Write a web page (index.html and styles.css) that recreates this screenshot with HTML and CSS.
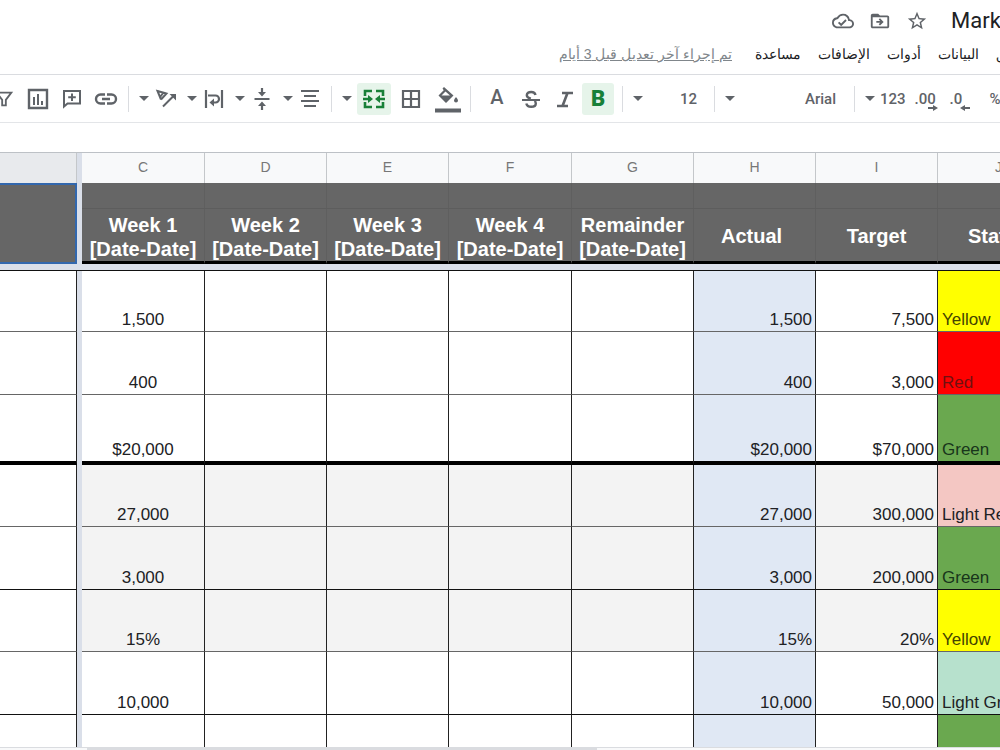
FILE: index.html
```html
<!DOCTYPE html>
<html lang="ar">
<head>
<meta charset="utf-8">
<title>Mark</title>
<link rel="stylesheet" href="styles.css">
</head>
<body>
<header class="top">
  <div class="title-row">
    <button class="plain" aria-label="Saved"><svg class="ic22" viewBox="0 0 24 24"><path fill="currentColor" d="M19.35 10.04A7.49 7.49 0 0 0 12 4C9.11 4 6.6 5.64 5.35 8.04A5.994 5.994 0 0 0 0 14c0 3.31 2.69 6 6 6h13c2.76 0 5-2.24 5-5 0-2.64-2.05-4.78-4.65-4.96zM19 18H6c-2.21 0-4-1.79-4-4 0-2.05 1.53-3.76 3.56-3.97l1.07-.11.5-.95A5.469 5.469 0 0 1 12 6c2.62 0 4.88 1.86 5.39 4.43l.3 1.5 1.53.11A2.98 2.98 0 0 1 22 15c0 1.65-1.35 3-3 3zm-9-3.18-2.09-2.09L6.5 14.14 10 17.6l6-6-1.4-1.4z"/></svg></button>
    <button class="plain" aria-label="Move"><svg class="ic22" viewBox="0 0 24 24"><path fill="currentColor" d="M20 6h-8l-2-2H4c-1.1 0-2 .9-2 2v12c0 1.1.9 2 2 2h16c1.1 0 2-.9 2-2V8c0-1.100-.9-2-2-2zm0 12H4V8h16v10zm-8-1 4-4-4-4-1.400 1.400L12.200 12H8v2h4.200l-1.600 1.600z"/></svg></button>
    <button class="plain" aria-label="Star"><svg class="ic22" viewBox="0 0 24 24"><path fill="currentColor" d="m22 9.240-7.190-.62L12 2 9.190 8.630 2 9.240l5.460 4.730L5.820 21 12 17.270 18.180 21l-1.630-7.030L22 9.240zM12 15.400l-3.760 2.270 1-4.280-3.320-2.880 4.380-.38L12 6.100l1.710 4.040 4.380.38-3.320 2.880 1 4.280L12 15.400z"/></svg></button>
    <h1 class="title">Mark</h1>
  </div>
  <nav class="menu">
    <a class="edited" href="#" dir="rtl">تم إجراء آخر تعديل قبل 3 أيام</a>
    <button class="plain item" dir="rtl">مساعدة</button>
    <button class="plain item" dir="rtl">الإضافات</button>
    <button class="plain item" dir="rtl">أدوات</button>
    <button class="plain item" dir="rtl">البيانات</button>
    <div class="cut"><button class="plain item" dir="rtl">تنسيق</button></div>
  </nav>
</header>

<div class="toolbar" role="toolbar">
  <div class="group">
    <button class="tool filter" aria-label="Filter"><svg class="ic22" viewBox="0 0 24 24"><path fill="none" stroke="currentColor" stroke-width="2" d="M4 5h16l-6 8v6h-4v-6z"/></svg></button>
    <button class="tool" aria-label="Chart"><svg class="ic22" viewBox="0 0 22 22"><path fill="none" stroke="currentColor" stroke-width="2.400" d="M2 2h18v18H2z"/><path stroke="currentColor" stroke-width="2" d="M7 9v8M11 6v11M15 13v4"/></svg></button>
    <button class="tool" aria-label="Comment"><svg class="ic22" viewBox="0 0 22 22"><path fill="none" stroke="currentColor" stroke-width="2" d="M3 3h16v12.500H6.500L3 18.500zM11 5.500v7.500M7.200 9.200h7.600"/></svg></button>
    <button class="tool" aria-label="Link"><svg class="ic24" viewBox="0 0 24 24"><path fill="none" stroke="currentColor" stroke-width="2.400" d="M11 7.500H6.500a4.300 4.300 0 0 0 0 9H11M13 7.500h4.500a4.300 4.300 0 0 1 0 9H13M8 12h8"/></svg></button>
  </div>
  <i class="sep"></i>
  <div class="group">
    <div class="combo"><button class="caret" aria-label="Rotation options"></button><button class="tool small" aria-label="Rotate text"><svg class="ic22" viewBox="0 0 22 22"><path fill="none" stroke="currentColor" stroke-width="2" d="M11.500 5.500 2.500 3l3.500 8.500M2.500 3l9 2.500L6 11.500M5.500 8.500l3-4M8 18.500 19 7.500"/><path fill="currentColor" d="M14.500 6H21v6.500z"/></svg></button></div>
    <div class="combo"><button class="caret" aria-label="Wrap options"></button><button class="tool small" aria-label="Wrap text"><svg class="ic22" viewBox="0 0 22 22"><path fill="none" stroke="currentColor" stroke-width="2.200" d="M3 2v18M19 2v18M5 7.500h7.500a3 3 0 0 1 0 7H10"/><path fill="currentColor" d="M11 10.500v8l-4.500-4z"/></svg></button></div>
    <div class="combo"><button class="caret" aria-label="Vertical options"></button><button class="tool small" aria-label="Vertical align"><svg class="ic22" viewBox="0 0 22 22"><path fill="none" stroke="currentColor" stroke-width="2.200" d="M3.500 11h15M11 0v5M11 17v5"/><path fill="currentColor" d="M7 4h8l-4 4.500zM7 18h8l-4-4.500z"/></svg></button></div>
    <div class="combo"><button class="caret" aria-label="Horizontal options"></button><button class="tool small" aria-label="Horizontal align"><svg class="ic22" viewBox="0 0 22 22"><path stroke="currentColor" stroke-width="2.200" d="M2 3h18M5 8h12M2 13h18M5 18h12"/></svg></button></div>
  </div>
  <i class="sep"></i>
  <div class="group">
    <button class="caret" aria-label="Merge options"></button>
    <button class="tool on" aria-label="Merge cells"><svg class="ic22" viewBox="0 0 22 22"><path fill="none" stroke="currentColor" stroke-width="2.600" d="M9 3H2v5M13 3h7v5M9 19H2v-5M13 19h7v-5M0 11h6M22 11h-6"/><path fill="currentColor" d="M5 7v8L10 11zM17 7v8L12 11z"/></svg></button>
    <button class="tool wide" aria-label="Borders"><svg class="ic22" viewBox="0 0 22 22"><path fill="none" stroke="currentColor" stroke-width="2.200" d="M3 3h16v16H3zM11 3v16M3 11h16"/></svg></button>
    <button class="tool" aria-label="Fill colour"><svg class="fill" viewBox="0 0 28 28"><path fill="currentColor" fill-rule="evenodd" d="m8.500 3.500 1.500-1.500 9.500 8.500-7.500 7.500-7.500-7.500 5.200-5.200zM11.500 6.500l-4 4h8.500zM22 12s2 2.300 2 3.500a2 2 0 0 1-4 0c0-1.200 2-3.500 2-3.500zM1 23.500h26v4H1z"/></svg></button>
  </div>
  <i class="sep"></i>
  <div class="group letters">
    <button class="tool letter-a">A</button>
    <button class="tool" aria-label="Strikethrough"><svg class="ic22" viewBox="0 0 22 22"><path fill="none" stroke="currentColor" stroke-width="2.400" d="M15.500 7C15 4.600 13.500 4 11.200 4 8.500 4 6.800 5 6.800 7.200c0 1.800 1.700 2.700 4 3.500M6.300 15.500c.5 2.200 2.200 3.300 4.900 3.300 2.800 0 4.600-1.200 4.600-3.300 0-1-.3-1.900-1.200-2.600"/><path stroke="currentColor" stroke-width="2" d="M2 12h18"/></svg></button>
    <button class="tool" aria-label="Italic"><svg class="ic22" viewBox="0 0 22 22"><path fill="none" stroke="currentColor" stroke-width="2.600" d="M8 5h11M3 18h11M13.500 5l-5 13"/></svg></button>
    <button class="tool on letter-b">B</button>
  </div>
  <i class="sep"></i>
  <div class="pick size"><span class="caret"></span><select aria-label="Font size"><option>12</option></select></div>
  <i class="sep"></i>
  <div class="pick font"><span class="caret"></span><select aria-label="Font"><option>Arial</option></select></div>
  <i class="sep"></i>
  <div class="group numbers">
    <button class="plain more"><span class="caret"></span>123</button>
    <button class="plain dec">.00<svg class="arrow" viewBox="0 0 10 6"><path fill="currentColor" d="M0 2h5V0l5 3-5 3V4H0z"/></svg></button>
    <button class="plain dec one">.0<svg class="arrow" viewBox="0 0 10 6"><path fill="currentColor" d="M10 2H5V0L0 3l5 3V4h5z"/></svg></button>
    <button class="plain percent">%</button>
  </div>
</div>

<main class="sheet">
  <table>
    <colgroup><col class="c-b"><col class="c-gap"><col class="c-plus"><col class="c"><col class="c"><col class="c-plus"><col class="c"><col class="c"><col class="c"><col class="c"></colgroup>
    <thead>
      <tr class="names"><th class="picked"></th><td class="gap"></td><th>C</th><th>D</th><th>E</th><th>F</th><th>G</th><th>H</th><th>I</th><th>J</th></tr>
      <tr class="band"><td class="selected" rowspan="2"></td><td class="gap"></td><td></td><td></td><td></td><td></td><td></td><td></td><td></td><td></td></tr>
      <tr class="heads"><td class="gap"></td><th class="two">Week 1<br>[Date-Date]</th><th class="two">Week 2<br>[Date-Date]</th><th class="two">Week 3<br>[Date-Date]</th><th class="two">Week 4<br>[Date-Date]</th><th class="two">Remainder<br>[Date-Date]</th><th class="lead">Actual</th><th>Target</th><th>Status</th></tr>
      <tr class="freeze"><td colspan="10"></td></tr>
    </thead>
    <tbody>
      <tr class="short"><td></td><td class="gap"></td><td class="mid">1,500</td><td></td><td></td><td></td><td></td><td class="actual">1,500</td><td class="num">7,500</td><td class="yellow">Yellow</td></tr>
      <tr class="tall"><td></td><td class="gap"></td><td class="mid">400</td><td></td><td></td><td></td><td></td><td class="actual">400</td><td class="num">3,000</td><td class="red">Red</td></tr>
      <tr class="thick"><td></td><td class="gap"></td><td class="mid">$20,000</td><td></td><td></td><td></td><td></td><td class="actual">$20,000</td><td class="num">$70,000</td><td class="green">Green</td></tr>
      <tr class="gray"><td></td><td class="gap"></td><td class="mid">27,000</td><td></td><td></td><td></td><td></td><td class="actual">27,000</td><td class="num">300,000</td><td class="pink">Light Red</td></tr>
      <tr class="gray tall solid"><td></td><td class="gap"></td><td class="mid">3,000</td><td></td><td></td><td></td><td></td><td class="actual">3,000</td><td class="num">200,000</td><td class="green">Green</td></tr>
      <tr class="gray"><td></td><td class="gap"></td><td class="mid">15%</td><td></td><td></td><td></td><td></td><td class="actual">15%</td><td class="num">20%</td><td class="yellow">Yellow</td></tr>
      <tr class="tall solid"><td></td><td class="gap"></td><td class="mid">10,000</td><td></td><td></td><td></td><td></td><td class="actual">10,000</td><td class="num">50,000</td><td class="mint">Light Green</td></tr>
      <tr><td></td><td class="gap"></td><td></td><td></td><td></td><td></td><td></td><td class="actual"></td><td></td><td class="green"></td></tr>
    </tbody>
  </table>
</main>
<footer class="scroll"><div class="thumb"></div></footer>
</body>
</html>
```
FILE: styles.css
```css
* { box-sizing: border-box; }
body {
  margin: 0;
  height: 100vh;
  display: flex;
  flex-direction: column;
  overflow: hidden;
  background: #fff;
  font-family: "Liberation Sans", Arial, sans-serif;
  color: #202124;
}
button, select { font: inherit; color: inherit; border: 0; background: none; padding: 0; margin: 0; }
svg { display: block; flex: none; }
.ic22 { width: 22px; height: 22px; }
.ic24 { width: 24px; height: 24px; }

.top { border-bottom: 1px solid #dadce0; height: 75px; flex: none; overflow: hidden; }
.title-row { display: flex; justify-content: flex-end; align-items: center; height: 42px; gap: 15px; color: #5f6368; }
.title { margin: 0 0 0 8px; width: 49px; overflow: hidden; font: 400 22px/28px Roboto, sans-serif; color: #202124; }
.menu { display: flex; justify-content: flex-end; align-items: center; height: 24px; gap: 17px; font-size: 14px; line-height: 24px; white-space: nowrap; }
.edited { color: #80868b; margin-right: 6px; }
.cut { width: 4px; overflow: hidden; }

.toolbar {
  display: flex;
  align-items: center;
  height: 48px;
  flex: none;
  border-bottom: 1px solid #e3e5e8;
  color: #5f6368;
  margin-left: -14px;
  font: 500 15px/20px Roboto, sans-serif;
}
.group, .combo, .pick { display: flex; align-items: center; flex: none; }
.combo { width: 48px; }
.tool { width: 34px; height: 32px; display: flex; align-items: center; justify-content: center; flex: none; }
.filter { width: 35px; }
.small { width: 24px; }
.wide { width: 40px; }
.on { background: #e6f4ea; color: #188038; border-radius: 3px; }
.fill { width: 28px; height: 28px; }
.sep { width: 1px; height: 26px; background: #dadce0; margin: 0 5px; flex: none; }
.combo + .combo { margin: 0; }
.caret { width: 20px; height: 20px; display: flex; align-items: center; justify-content: center; flex: none; }
.caret::before { content: ""; border: 5px solid transparent; border-top-color: currentColor; border-bottom: 0; }
.letters { padding: 0 3px 0 4px; }
.letter-a { font-size: 20px; padding-bottom: 4px; }
.letter-b { font-size: 22px; font-weight: 900; width: 32px; }
.pick select { appearance: none; flex: 1; direction: rtl; text-align: right; }
.size { width: 81px; padding-right: 12px; }
.font { width: 129px; padding-right: 13px; }
.numbers { gap: 9px; }
.more { display: flex; align-items: center; }
.dec { position: relative; width: 23px; text-align: left; }
.one { width: 20px; margin-left: 3px; }
.arrow { position: absolute; right: 0; bottom: -2px; width: 10px; height: 6px; }
.percent { margin-left: 11px; }

.sheet { flex: 1; min-height: 0; overflow: hidden; margin-top: 29px; border-top: 1px solid #bdc1c6; }
table { table-layout: fixed; width: 1060px; border-collapse: separate; border-spacing: 0; font-size: 17px; line-height: 20px; }
.c-b { width: 77px; }
.c-gap { width: 5px; }
.c { width: 122px; }
.c-plus { width: 123px; }
th, td { padding: 0; }
.gap { background: #dadfe9; }
.names th { height: 30px; padding-bottom: 2px; font-size: 14px; font-weight: 400; color: #777; background: #f8f9fa; border-right: 1px solid #c4c7ca; }
.names .picked { background: #e8eaed; }
.band td { height: 26px; background: #666; border-right: 1px solid #5f5f5f; border-bottom: 1px solid #5d5d5d; }
.band .selected { border: 2px solid #3267ad; border-left: 0; }
.heads th { height: 55px; padding-top: 2px; font-size: 20px; line-height: 24px; color: #fff; background: #666; border-right: 1px solid #5f5f5f; border-bottom: 3px solid #000; }
.heads .two { padding-top: 4px; }
.heads .lead { padding-right: 6px; }
.heads .gap, .band .gap, tbody tr .gap { background: #dadfe9; border: 0; }
.freeze td { height: 7px; background: #dadfe9; border-bottom: 1px solid #111; }
tbody td { height: 62px; vertical-align: bottom; padding: 0 3px 1px; border-right: 1px solid #222; border-bottom: 1px solid #666; white-space: nowrap; }
tbody td.gap { padding: 0; }
.short td { height: 61px; }
.tall td { height: 63px; }
.thick td { height: 70px; border-bottom: 4px solid #000; }
.solid td { border-bottom-color: #111; }
.gray { background: #f3f3f3; }
.gray td:first-child { background: #fff; }
td:last-child { padding-left: 4px; }
.mid { text-align: center; }
.num, .actual { text-align: right; }
.actual { background: #e0e8f4; }
.yellow { background: #ff0; color: #444400; }
.red { background: #f00; color: #701010; }
.green { background: #6aa84f; color: #18351b; }
.pink { background: #f4c7c3; }
.mint { background: #b7e1cd; }

.scroll { height: 3px; flex: none; background: #f8f9fa; border-top: 1px solid #dadce0; padding-left: 87px; }
.thumb { width: 51vw; height: 2px; background: #dadce0; }
```
